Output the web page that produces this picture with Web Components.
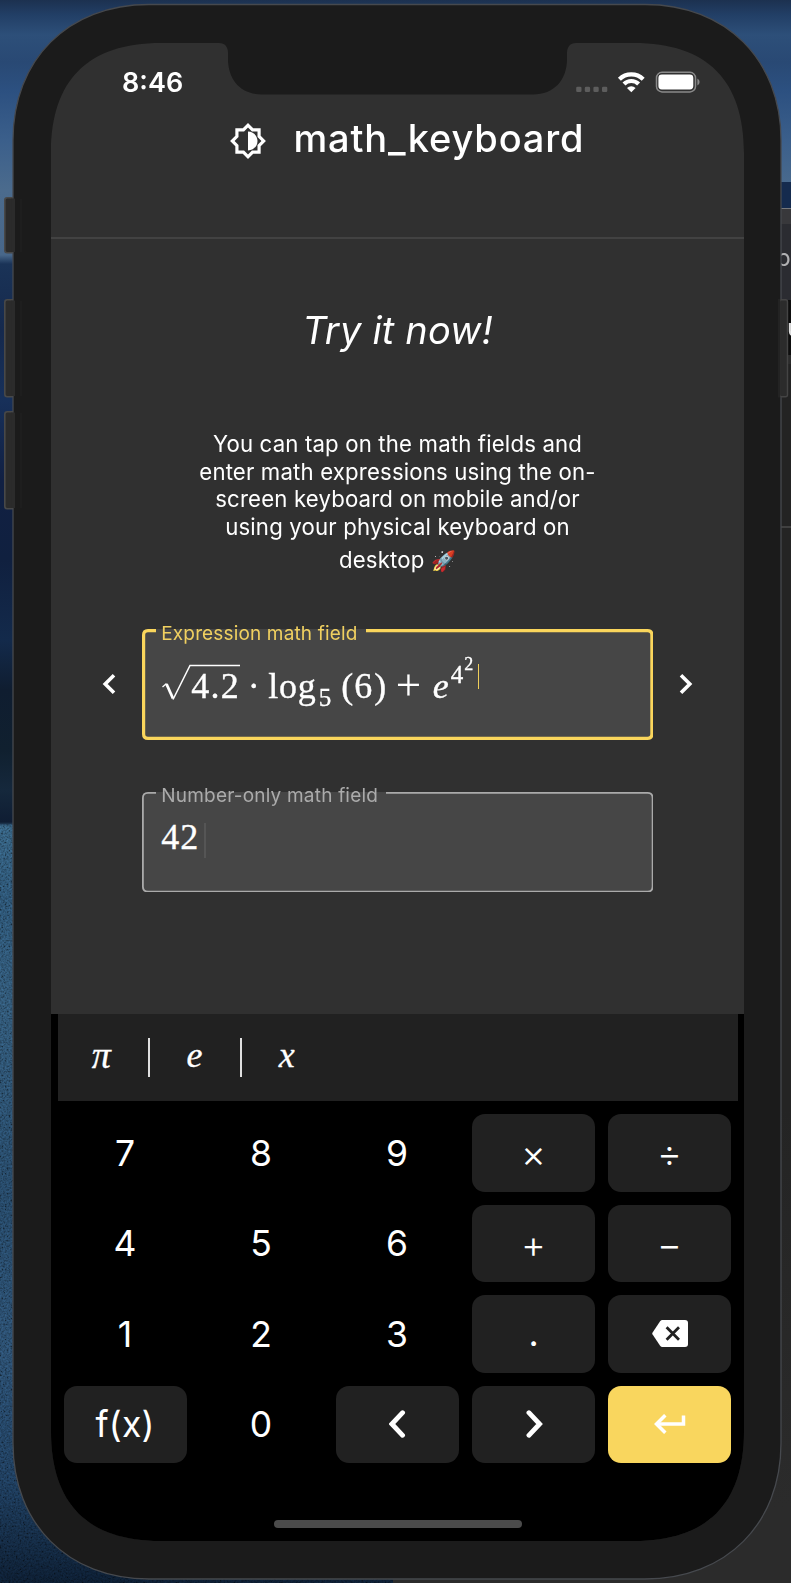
<!DOCTYPE html>
<html lang="en">
<head>
<meta charset="utf-8">
<title>math_keyboard</title>
<style>
  html, body { margin: 0; padding: 0; background: #101c2e; }
  body { width: 791px; height: 1583px; overflow: hidden; font-family: Inter, "Noto Sans", sans-serif; color: #fff; }
</style>
</head>
<body>
<desk-top>
  <phone-frame>
    <status-bar></status-bar>
    <app-header>math_keyboard</app-header>
    <try-section>
      <span slot="title">Try it now!</span>
      <span slot="text">You can tap on the math fields and<br>enter math expressions using the on-<br>screen keyboard on mobile and/or<br>using your physical keyboard on</span>
      <span slot="last">desktop <span style="font-size:20px">🚀</span></span>
      <math-field slot="expression" active label="Expression math field"><math-expression></math-expression></math-field>
      <math-field slot="number" label="Number-only math field"><math-number>42</math-number></math-field>
    </try-section>
    <math-keyboard></math-keyboard>
  </phone-frame>
</desk-top>
<script>
const define = (name, html) => {
  const t = document.createElement('template');
  t.innerHTML = html;
  customElements.define(name, class extends HTMLElement {
    constructor() {
      super();
      this.attachShadow({ mode: 'open' }).append(t.content.cloneNode(true));
    }
  });
};

/* Desktop with the wallpaper and a window behind the phone */
define('desk-top', `
<style>
  :host { display: block; position: relative; width: 791px; height: 1583px; overflow: hidden;
    background: linear-gradient(#1c3150 0, #223f66 15px, #2d4f79 35px, #294974 62px, #2c5080 90px, #3b5f8b 140px, #4b6b8d 190px, #48678a 255px,
      #1a3357 264px, #15294d 330px, #17305a 400px, #112043 480px, #10203f 560px, #132a4b 640px, #0f1d30 690px, #10202f 750px, #15283c 790px, #0f1d33 822px,
      #2f5570 826px, #274a66 900px, #2b4d68 1000px, #213f5a 1200px, #264562 1350px, #1b3652 1480px, #0b1a2c 1583px); }
  .grain { position: absolute; left: 0; top: 824px; width: 393px; height: 759px; mix-blend-mode: overlay; opacity: .4; }
  .sky { position: absolute; right: 0; top: 182px; width: 60px; height: 26px; background: #152b4e; }
  .window { position: absolute; left: 393px; top: 208px; right: 0; bottom: 0; overflow: hidden;
    background: linear-gradient(#77797d 0 1px, #38383b 1px 16px, #2b2c31 16px 92px, #0e0e0e 92px 147px, #2c2c2c 147px 156px, #232323 156px 318px, #404040 318px 320px, #242424 320px 900px, #2b2b2b 1300px); }
  .window span { position: absolute; color: #b0b0b2; font-size: 24px; line-height: 30px; white-space: nowrap; }
</style>
<svg class="grain" aria-hidden="true"><filter id="g"><feTurbulence type="fractalNoise" baseFrequency=".55" numOctaves="2"/><feColorMatrix values="1.6 0 0 0 -.35  1.6 0 0 0 -.35  1.6 0 0 0 -.35  0 0 0 0 1"/></filter><rect width="100%" height="100%" filter="url(#g)"/></svg>
<div class="sky"></div>
<div class="window"><span style="left:383px;top:35px">p</span><span style="left:394px;top:105px;color:#ddd">u</span></div>
<slot></slot>`);

/* Phone hardware: case, notch and side buttons lie around the screen */
define('phone-frame', `
<style>
  :host { display: block; position: relative; width: 791px; height: 1583px; z-index: 0; }
  .screen { position: absolute; z-index: 1; left: 51px; top: 43px; width: 693px; height: 1498px; background: #303030; display: flex; flex-direction: column; overflow: hidden;
    clip-path: path("M0 110C0 37 37 0 110 0H168C174 0 177 4 177 10V16C177 37 190 51.500 211 51.500H482C503 51.500 516 37 516 16V10C516 4 519 0 525 0H583C656 0 693 37 693 110V1388C693 1461 656 1498 583 1498H110C37 1498 0 1461 0 1388Z"); }
  svg { position: absolute; left: 0; top: 0; pointer-events: none; }
</style>
<svg width="791" height="1583" viewBox="0 0 791 1583" aria-hidden="true">
  <g fill="#2b2b2b" stroke="#484848" stroke-width="1.6">
    <rect x="4.8" y="197.8" width="16" height="55" rx="2.5"/>
    <rect x="4.8" y="299.8" width="16" height="97" rx="2.5"/>
    <rect x="4.8" y="411.8" width="16" height="97" rx="2.5"/>
  </g>
  <path fill="#1b1b1b" stroke="#46494e" stroke-width="1.3" d="M13 140.500C13 59.500 68 4.500 149 4.500H645C726 4.500 781 59.500 781 140.500V1443C781 1524 726 1579 645 1579H149C68 1579 13 1524 13 1443Z"/>
  <path fill="#2b2b2b" d="M11.500 198.500H15v53.600h-3.500zM11.500 300.500H15v95.600h-3.500zM11.500 412.500H15v95.600h-3.500z"/>
  <path fill="#222" d="M20.500 199h1v53h-1zM20.500 301h1v95h-1zM20.500 413h1v95h-1z"/>
  <rect x="779.500" y="299.800" width="8" height="97" rx="2" fill="#2b2b2b" stroke="#444" stroke-width="1.400"/>
  <rect x="778" y="299" width="2.200" height="98.500" fill="#232323"/>
</svg>
<div class="screen"><slot></slot></div>`);

define('status-bar', `
<style>
  :host { display: flex; height: 72px; box-sizing: border-box; padding: 20px 44px 0 71px; justify-content: space-between; align-items: flex-start; }
  time { font-size: 27px; line-height: 38px; font-weight: 600; letter-spacing: 0; margin-top: 1px; }
  svg { display: block; margin-top: 5px; }
</style>
<time>8:46</time>
<svg width="126" height="28" viewBox="574 68 126 28" aria-label="No signal, Wi-Fi, battery full">
  <g fill="#5d5d5d"><rect x="576.200" y="86.800" width="5.300" height="5.300" rx="1.300"/><rect x="584.800" y="86.800" width="5.300" height="5.300" rx="1.300"/><rect x="593.400" y="86.800" width="5.300" height="5.300" rx="1.300"/><rect x="602" y="86.800" width="5.300" height="5.300" rx="1.300"/></g>
  <g fill="none" stroke="#fff" stroke-width="4.200"><path d="M619.400 79.300a17 17 0 0 1 23.800 0"/><path d="M624 84a10.400 10.400 0 0 1 14.600 0"/></g>
  <path d="M631.300 92.200l-4.300-4.300a6.200 6.200 0 0 1 8.600 0z" fill="#fff"/>
  <rect x="656.500" y="72.300" width="39" height="19.600" rx="5.500" fill="none" stroke="#898989" stroke-width="1.500"/>
  <rect x="658.400" y="74.600" width="34.900" height="14.900" rx="3.400" fill="#fff"/>
  <path d="M697.400 78.600q2.200 1 2.200 3.500t-2.200 3.500z" fill="#898989"/>
</svg>`);

define('app-header', `
<style>
  :host { display: flex; box-sizing: border-box; height: 124px; padding: 0 0 0 178px; border-bottom: 2px solid #424242; align-items: flex-start; }
  svg { margin: 7px 26.500px 0 0; flex: none; }
  h1 { margin: -1px 0 0; font-size: 38px; line-height: 48px; font-weight: 500; letter-spacing: .85px; white-space: nowrap; }
</style>
<svg width="38" height="38" viewBox="0 0 24 24" fill="#fff"><path fill-rule="evenodd" d="M20 8.690V4h-4.690L12 .690 8.690 4H4v4.690L.690 12 4 15.310V20h4.690L12 23.310 15.310 20H20v-4.690L23.310 12zM18 14.480V18h-3.520L12 20.480 9.520 18H6v-3.520L3.520 12 6 9.520V6h3.520L12 3.520 14.480 6H18v3.520L20.480 12z"/><path d="M12 6v12c3.310 0 6-2.690 6-6s-2.690-6-6-6z"/></svg>
<h1><slot></slot></h1>`);

define('try-section', `
<style>
  :host { display: block; height: 774.500px; flex: none; box-sizing: border-box; padding-top: 63.500px; text-align: center; }
  h2 { margin: 0 0 73.500px; font-size: 38px; line-height: 54px; font-weight: 400; font-style: italic; letter-spacing: .2px; }
  p { margin: 0; font-size: 22.200px; line-height: 27.500px; letter-spacing: .16px; white-space: nowrap; }
  p.last { line-height: 34px; height: 34px; margin-top: 3px; }
  .row { display: flex; justify-content: space-between; padding: 0 51px; align-items: center; margin-top: 52.300px; }
  .row svg { margin-bottom: 2px; }
  .number { display: flex; justify-content: center; margin-top: 51.300px; }
</style>
<h2><slot name="title"></slot></h2>
<p><slot name="text"></slot></p>
<p class="last"><slot name="last"></slot></p>
<div class="row">
  <svg width="14" height="22" viewBox="0 0 14 22" fill="none" stroke="#fff" stroke-width="3.600"><path d="M12 2.200 3.200 11l8.800 8.800"/></svg>
  <slot name="expression"></slot>
  <svg width="14" height="22" viewBox="0 0 14 22" fill="none" stroke="#fff" stroke-width="3.600"><path d="M2 2.200 10.800 11 2 19.800"/></svg>
</div>
<div class="number"><slot name="number"></slot></div>`);

customElements.define('math-field', class extends HTMLElement {
  connectedCallback() {
    const on = this.hasAttribute('active');
    const h = on ? 111 : 100.5, s = on ? 3.2 : 1.8, m = s / 2, w = 511.5, r = 6, gap = on ? 224 : 244;
    this.attachShadow({ mode: 'open' }).innerHTML = `
<style>
  :host { display: block; position: relative; box-sizing: border-box; width: ${w}px; height: ${h}px; border-radius: 6px; background: #464646; padding: ${on ? 28.5 : 23.5}px 0 0 19.5px; text-align: left; }
  svg { position: absolute; inset: 0; }
  label { position: absolute; left: 19.5px; top: -7.5px; font-size: 19px; line-height: 24px; letter-spacing: ${on ? .15 : .2}px; color: ${on ? '#f0d060' : '#ababab'}; white-space: nowrap; }
</style>
<svg width="${w}" height="${h}" fill="none" stroke="${on ? '#fad65c' : '#aaa'}" stroke-width="${s}"><path d="M${gap} ${m}H${w - r}Q${w - m} ${m} ${w - m} ${r}V${h - r}Q${w - m} ${h - m} ${w - r} ${h - m}H${r}Q${m} ${h - m} ${m} ${h - r}V${r}Q${m} ${m} ${r} ${m}H14"/></svg>
<label>${this.getAttribute('label')}</label>
<slot></slot>`;
  }
});

/* Every token has its own advance width; scripts are lifted off the baseline */
define('math-expression', `
<style>
  :host { display: flex; align-items: baseline; height: 50px; font: 36px/50px "Liberation Serif", serif; white-space: nowrap; -webkit-text-stroke: .35px #fff; }
  span { display: block; flex: none; position: relative; }
  i { font-style: italic; }
  .root { width: 80px; height: 50px; padding-left: 30px; box-sizing: border-box; margin-right: 6px; letter-spacing: 1.200px; }
  .root svg { position: absolute; left: 1px; top: -1px; }
  .small { font-size: 25px; } .tiny { font-size: 18px; }
  .cursor { width: 1.300px; height: 25px; background: #f0cf5a; align-self: flex-start; margin: 6px 0 0 4px; }
</style>
<span class="root"><svg width="80" height="50" fill="none" stroke="#fff"><path stroke-width="1.300" d="M.500 27l4-3.500"/><path stroke-width="2.800" d="M4.500 24l6.500 14.500"/><path stroke-width="1.500" d="M11 39.500 28 5.500H78"/></svg>4.2</span>
<span style="width:21px;left:.5px">·</span>
<span style="width:51px;letter-spacing:.8px">log</span>
<span class="small" style="width:22px;top:8px;left:-.5px">5</span>
<span style="width:13px">(</span>
<span style="width:20px">6</span>
<span style="width:21.500px">)</span>
<span style="width:37px;height:50px;font-size:45px;line-height:50px;top:2.500px;-webkit-text-stroke:0">+</span>
<span style="width:18px"><i>e</i></span>
<span class="small" style="width:14px;top:-15px">4</span>
<span class="tiny" style="width:9px;top:-27.500px;left:-.5px">2</span>
<span class="cursor"></span>`);

define('math-number', `
<style>
  :host { display: flex; font: 36px/44px "Liberation Serif", serif; letter-spacing: 1px; -webkit-text-stroke: .35px #fff; }
  i { width: 1.300px; height: 35px; background: #555; margin: 7.500px 0 0 5px; }
</style><slot></slot><i></i>`);

define('key-cap', `
<style>
  :host { display: flex; align-items: center; justify-content: center; box-sizing: border-box; border-radius: 13px; padding: 2px 1px 0 0; font-size: 35.500px; line-height: 44px; color: #fff; }
  :host([tone="dark"]) { background: #212121; }
  :host([tone="enter"]) { background: #f9d65e; padding: 0; }
  :host([op]) { font-size: 38px; font-weight: 300; padding: 1px 0 0; }
  :host([icon]) { padding: 0; }
  ::slotted(svg) { display: block; }
</style><slot></slot>`);

define('math-keyboard', `
<style>
  :host { display: block; flex: 1; background: #000; }
  .vars { margin: 0 6.500px; height: 87.500px; background: #212121; display: flex; align-items: center; font: italic 36px/44px "Liberation Serif", serif; -webkit-text-stroke: .3px #fff; }
  .vars span { width: 90.500px; text-align: center; box-sizing: border-box; padding: 0 1px 5px 0; }
  .vars b { width: 1.800px; height: 39px; background: #e0e0e0; flex: none; }
  .vars .pi { font-size: 38px; padding-right: 3px; }
  .keys { display: grid; grid-template-columns: repeat(5, 123px); grid-auto-rows: 77.500px; gap: 13px; padding: 13px 13px 0; }
  .fx { letter-spacing: .2px; }
  .home { width: 248px; height: 8px; border-radius: 4px; background: #4b4b4b; margin: 56.500px auto 0; }
</style>
<div class="vars"><span class="pi">π</span><b></b><span>e</span><b></b><span>x</span></div>
<div class="keys">
  <key-cap>7</key-cap><key-cap>8</key-cap><key-cap>9</key-cap><key-cap tone="dark" op>×</key-cap><key-cap tone="dark" op>÷</key-cap>
  <key-cap>4</key-cap><key-cap>5</key-cap><key-cap>6</key-cap><key-cap tone="dark" op>+</key-cap><key-cap tone="dark" op>−</key-cap>
  <key-cap>1</key-cap><key-cap>2</key-cap><key-cap>3</key-cap><key-cap tone="dark" style="padding:0">.</key-cap>
  <key-cap tone="dark" icon><svg width="36" height="27" viewBox="0 0 36 27"><path fill="#fff" d="M10.500 0H33q3 0 3 3v21q0 3-3 3H10.500q-1.500 0-2.400-1.300L.600 14.600q-.7-1.100 0-2.200L8.100 1.300Q9 0 10.500 0z"/><path stroke="#212121" stroke-width="2.800" d="M14.600 7.300l12.400 12.400M27 7.300 14.600 19.700"/></svg></key-cap>
  <key-cap class="fx" tone="dark">f(x)</key-cap><key-cap>0</key-cap>
  <key-cap tone="dark" icon><svg width="18" height="28" viewBox="0 0 18 28" fill="none" stroke="#fff" stroke-width="4.800" stroke-linecap="round"><path d="M13.600 2.700 2.900 14l10.700 11.300"/></svg></key-cap>
  <key-cap tone="dark" icon><svg width="18" height="28" viewBox="0 0 18 28" fill="none" stroke="#fff" stroke-width="4.800" stroke-linecap="round"><path d="M3.900 2.700 14.600 14l-10.700 11.300"/></svg></key-cap>
  <key-cap tone="enter"><svg width="32" height="20" viewBox="0 0 32 20" fill="none" stroke="#fff" stroke-width="3.500"><path d="M29.500 1.500V10H3"/><path d="M11.300 1.200 2.500 10l8.800 8.800"/></svg></key-cap>
</div>
<div class="home"></div>`);
</script>
</body>
</html>
